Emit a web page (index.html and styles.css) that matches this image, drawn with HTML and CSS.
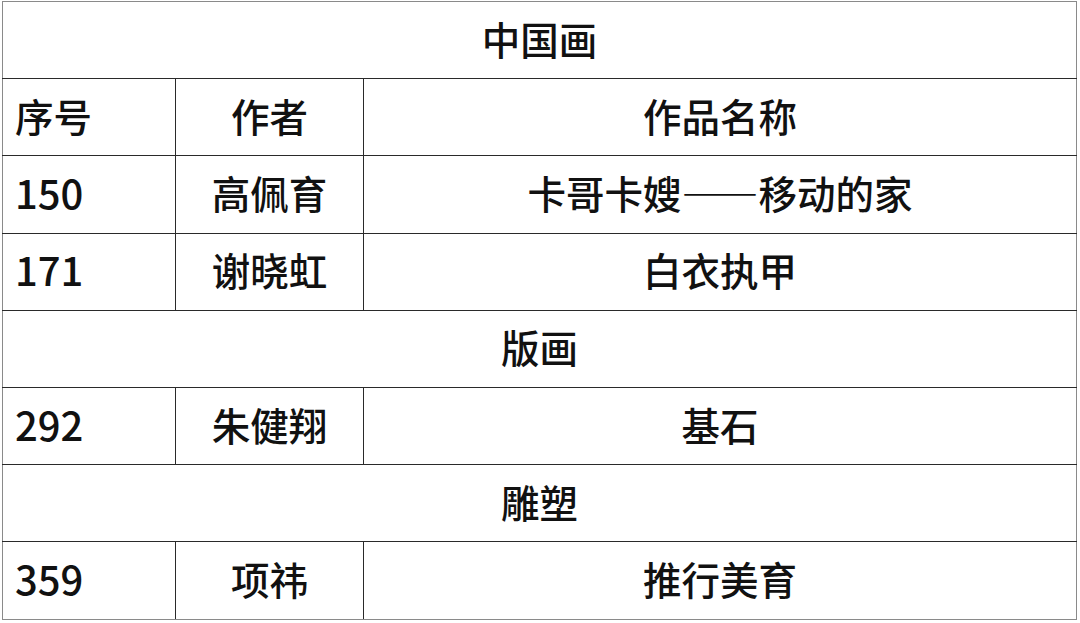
FILE: index.html
```html
<!DOCTYPE html>
<html lang="zh-CN">
<head>
<meta charset="utf-8">
<title>中国画</title>
<link rel="stylesheet" href="styles.css">
</head>
<body>
<table class="works">
  <colgroup>
    <col class="c-no">
    <col class="c-author">
    <col class="c-title">
  </colgroup>
  <tr><td class="section" colspan="3">中国画</td></tr>
  <tr><td class="no">序号</td><td class="mid">作者</td><td class="mid">作品名称</td></tr>
  <tr><td class="no num">150</td><td class="mid">高佩育</td><td class="mid">卡哥卡嫂——移动的家</td></tr>
  <tr><td class="no num">171</td><td class="mid">谢晓虹</td><td class="mid">白衣执甲</td></tr>
  <tr><td class="section" colspan="3">版画</td></tr>
  <tr><td class="no num">292</td><td class="mid">朱健翔</td><td class="mid">基石</td></tr>
  <tr><td class="section" colspan="3">雕塑</td></tr>
  <tr><td class="no num">359</td><td class="mid">项祎</td><td class="mid">推行美育</td></tr>
</table>
</body>
</html>
```
FILE: styles.css
```css
html, body {
  margin: 0;
  padding: 0;
  background: #fff;
}
body {
  padding: 1px 0 0 2px;
  font-family: "Noto Sans CJK SC", "Open Sans", sans-serif;
  color: #111;
}
.works {
  border-collapse: collapse;
  width: 1075px;
  table-layout: fixed;
  border: 1px solid #8a8a8a;
}
.c-no { width: 173px; }
.c-author { width: 188px; }
.c-title { width: auto; }
.works td {
  border: 1px solid #2a2a2a;
  height: 77.2px;
  padding: 0 0 5px 0;
  font-size: 38.5px;
  font-weight: 500;
  line-height: 40px;
  vertical-align: middle;
  box-sizing: border-box;
}
.works tr:first-child td { border-top-color: #8a8a8a; }
.works tr:last-child td { border-bottom-color: #8a8a8a; }
.works td:first-child { border-left-color: #8a8a8a; }
.works td:last-child { border-right-color: #8a8a8a; }
.works .section { text-align: center; }
.works .no { text-align: left; padding-left: 12px; }
.works .num { font-size: 40px; }
.works .mid { text-align: center; }
```
